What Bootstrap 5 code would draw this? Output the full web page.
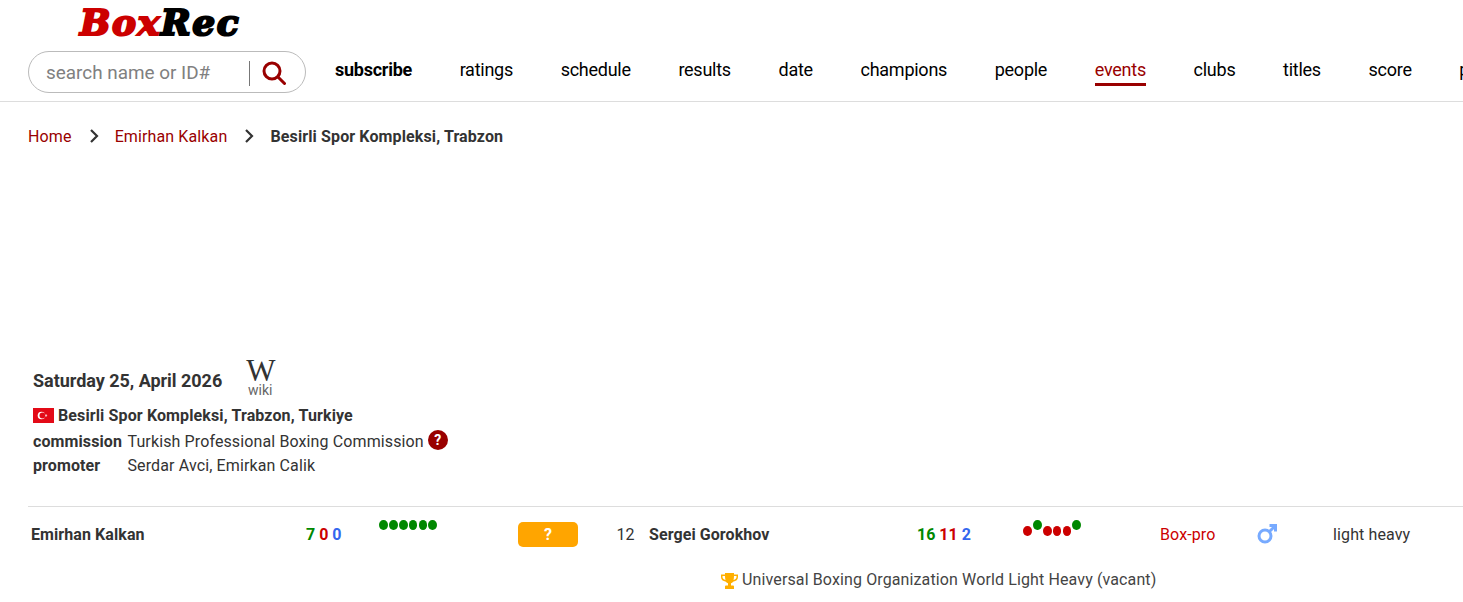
<!DOCTYPE html>
<html lang="en">

<head>
    <meta charset="UTF-8">
    <meta name="viewport" content="width=device-width, initial-scale=1.0">
    <title>BoxRec - Besirli Spor Kompleksi, Trabzon</title>
    <link href="https://cdn.jsdelivr.net/npm/bootstrap@5.3.0/dist/css/bootstrap.min.css" rel="stylesheet">
    <style>
        html, body {
            height: 602px;
            overflow: hidden;
        }

        body {
            font-family: Roboto, "Liberation Sans", sans-serif;
            font-size: 16px;
            line-height: 24px;
            letter-spacing: 0.12px;
            color: #333;
            background: #fff;
        }

        a {
            color: #990000;
            text-decoration: none;
        }

        .site-head {
            height: 102px;
            border-bottom: 1px solid #ddd;
            padding-left: 28px;
            overflow: hidden;
        }

        .logo-line {
            height: 51px;
            padding-left: 52px;
            padding-top: 4px;
        }

        .logo-text {
            font-family: "DejaVu Serif", serif;
            font-weight: 700;
            font-style: italic;
            font-size: 36px;
            line-height: 36px;
            letter-spacing: 1.6px;
            -webkit-text-stroke: 2.2px currentColor;
            display: block;
        }

        .logo-box {
            color: #cc0000;
        }

        .logo-rec {
            color: #000;
        }

        .search-pill {
            width: 278px;
            height: 42px;
            border: 1px solid #bbb;
            border-radius: 21px;
            padding-left: 17px;
            flex-shrink: 0;
        }

        .search-hint {
            width: 203px;
            font-size: 18.9px;
            letter-spacing: 0;
            color: #808080;
            padding-top: 1px;
        }

        .search-rule {
            width: 1px;
            height: 25px;
            margin-top: 2px;
            background: #777;
        }

        .search-glass {
            margin-left: 12px;
            margin-top: 2px;
        }

        .main-links {
            margin-left: 29px;
            margin-top: 4px;
            gap: 47.6px;
            font-size: 18px;
            letter-spacing: -0.25px;
            white-space: nowrap;
        }

        .main-links a {
            color: #000;
            display: block;
            height: 30px;
            line-height: 30px;
        }

        .main-links a.now {
            color: #990000;
            border-bottom: 3px solid #990000;
            height: 31px;
        }

        .main-links a.sub {
            font-weight: 700;
        }

        .crumbs {
            padding: 23px 0 0 28px;
            height: 257px;
            white-space: nowrap;
        }

        .crumb-sep {
            margin: 0 16px 0 13px;
            vertical-align: -1px;
        }

        .event-info {
            padding-left: 33px;
            height: 147px;
        }

        .date-line {
            height: 44px;
        }

        .date-text {
            font-size: 18px;
            font-weight: 700;
            letter-spacing: -0.03px;
            margin-top: 10px;
        }

        .wiki-mark {
            width: 28px;
            margin-left: 24px;
            text-align: center;
            color: #666;
            font-size: 14px;
            line-height: 14px;
            letter-spacing: 0;
        }

        .wiki-w {
            font-family: "Liberation Serif", serif;
            font-size: 31px;
            line-height: 24px;
            color: #333;
            display: block;
        }

        .venue-line {
            height: 25px;
            margin-bottom: 2px;
            font-weight: 700;
        }

        .flag-tr {
            margin-right: 4px;
        }

        .fact-line {
            height: 24px;
        }

        .fact-label {
            width: 94.5px;
            font-weight: 700;
            letter-spacing: 0.1px;
        }

        .ask-dot {
            width: 20px;
            height: 20px;
            border-radius: 50%;
            background: #990000;
            color: #fff;
            font-size: 14px;
            font-weight: 700;
            line-height: 20px;
            text-align: center;
            margin-left: 4px;
        }

        .bout-row {
            margin-left: 28px;
            border-top: 1px solid #ddd;
            height: 59px;
            white-space: nowrap;
        }

        .cell-a { width: 278px; padding-left: 3px; font-weight: 700; padding-top: 16px; letter-spacing: 0.08px; }
        .cell-rec { font-weight: 700; padding-top: 16px; letter-spacing: 0; }
        .cell-b { font-weight: 700; padding-top: 16px; letter-spacing: 0.08px; }
        .cell-num { width: 33px; text-align: center; padding-top: 16px; }
        .cell-rat { padding-top: 13px; }

        .rec-w { color: #008800; }
        .rec-l { color: #cc0000; }
        .rec-d { color: #3366ee; }

        .streak {
            gap: 1.1px;
            height: 24px;
            align-items: flex-start;
        }

        .pip {
            width: 8.800px;
            height: 10px;
            border-radius: 50%;
            background: #008800;
        }

        .pip.lost {
            background: #cc0000;
            margin-top: 6px;
        }

        .odds-btn {
            width: 60px;
            height: 25px;
            margin-top: 15px;
            border-radius: 5px;
            background: #ffa500;
            color: #fff;
            font-size: 16px;
            font-weight: 700;
            line-height: 25px;
            text-align: center;
        }

        .bout-title {
            padding-left: 721px;
            margin-top: 3px;
            color: #444;
            white-space: nowrap;
        }
    </style>
</head>

<body>
    <header class="site-head">
        <div class="logo-line">
            <a class="logo-text" href="#"><span class="logo-box">Box</span><span class="logo-rec">Rec</span></a>
        </div>
        <div class="d-flex align-items-start">
            <div class="search-pill d-flex align-items-center">
                <span class="search-hint">search name or ID#</span>
                <span class="search-rule"></span>
                <svg class="search-glass" width="24" height="24" viewBox="0 0 24 24" fill="none" stroke="#990000" stroke-width="3" stroke-linecap="round">
                    <circle cx="10" cy="10" r="8"/>
                    <path d="M16 16l6.500 6.500"/>
                </svg>
            </div>
            <nav class="main-links d-flex">
                <a class="sub" href="#">subscribe</a>
                <a href="#">ratings</a>
                <a href="#">schedule</a>
                <a href="#">results</a>
                <a href="#">date</a>
                <a href="#">champions</a>
                <a href="#">people</a>
                <a class="now" href="#">events</a>
                <a href="#">clubs</a>
                <a href="#">titles</a>
                <a href="#">score</a>
                <a href="#">pro</a>
            </nav>
        </div>
    </header>

    <div class="crumbs">
        <a href="#">Home</a>
        <svg class="crumb-sep" width="10" height="14" viewBox="0 0 10 14" fill="none" stroke="#333" stroke-width="2.200"><path d="M2 1l6 6-6 6"/></svg><a href="#">Emirhan Kalkan</a>
        <svg class="crumb-sep" width="10" height="14" viewBox="0 0 10 14" fill="none" stroke="#333" stroke-width="2.200"><path d="M2 1l6 6-6 6"/></svg><b>Besirli Spor Kompleksi, Trabzon</b>
    </div>

    <section class="event-info">
        <div class="date-line d-flex">
            <div class="date-text">Saturday 25, April 2026</div>
            <div class="wiki-mark"><span class="wiki-w">W</span>wiki</div>
        </div>
        <div class="venue-line d-flex align-items-center">
            <svg class="flag-tr" width="21" height="15" viewBox="0 0 21 15">
                <rect width="21" height="15" fill="#e30a17"/>
                <circle cx="8.500" cy="7.500" r="3.800" fill="#fff"/>
                <circle cx="9.500" cy="7.500" r="3" fill="#e30a17"/>
                <polygon points="14.500,7.500 11.800,6.600 13.500,8.900 13.500,6.100 11.800,8.400" fill="#fff"/>
            </svg>
            <span>Besirli Spor Kompleksi, Trabzon, Turkiye</span>
        </div>
        <div class="fact-line d-flex">
            <span class="fact-label">commission</span>
            <span>Turkish Professional Boxing Commission</span>
            <span class="ask-dot">?</span>
        </div>
        <div class="fact-line d-flex">
            <span class="fact-label">promoter</span>
            <span>Serdar Avci, Emirkan Calik</span>
        </div>
    </section>

    <div class="bout-row d-flex">
        <div class="cell-a">Emirhan Kalkan</div>
        <div class="cell-rec" style="width: 73px"><span class="rec-w">7</span> <span class="rec-l">0</span> <span class="rec-d">0</span></div>
        <div class="cell-rat" style="width: 139px"><div class="streak d-flex"><i class="pip"></i><i class="pip"></i><i class="pip"></i><i class="pip"></i><i class="pip"></i><i class="pip"></i></div></div>
        <div class="odds-btn">?</div>
        <div class="cell-num" style="margin-left: 31px">12</div>
        <div class="cell-b" style="margin-left: 7px; width: 268px">Sergei Gorokhov</div>
        <div class="cell-rec" style="width: 106px"><span class="rec-w">16</span> <span class="rec-l">11</span> <span class="rec-d">2</span></div>
        <div class="cell-rat" style="width: 137px"><div class="streak d-flex"><i class="pip lost"></i><i class="pip"></i><i class="pip lost"></i><i class="pip lost"></i><i class="pip lost"></i><i class="pip"></i></div></div>
        <div style="width: 97px; padding-top: 16px"><a class="rec-l" href="#">Box-pro</a></div>
        <div style="width: 76px; padding-top: 14px">
            <svg width="20" height="20" viewBox="0 0 20 20" fill="none" stroke="#77aaff" stroke-width="3"><circle cx="8" cy="12" r="6"/><path d="M12.500 7.500L18.500 1.500M12.500 1.500H18.500V7.500"/></svg>
        </div>
        <div style="padding-top: 16px">light heavy</div>
    </div>

    <div class="bout-title">
        <svg width="17" height="16" viewBox="0 0 17 16" fill="#ffaf00"><path d="M4 0h9v1.500h4V4c0 2.600-1.800 4.200-4.900 4.700-.6.8-1.200 1.200-2.100 1.500v2.300h1.800c.8 0 1.200.5 1.200 1.200V16H4v-2.300c0-.7.4-1.200 1.200-1.200H7v-2.300c-.9-.3-1.500-.7-2.100-1.500C1.800 8.200 0 6.600 0 4V1.500h4zM1.500 3v1c0 1.400 1 2.500 3 3.100C4.200 5.900 4 4.500 4 3zm14 0H13c0 1.500-.2 2.900-.5 4.100 2-.6 3-1.700 3-3.100z"/></svg>
        Universal Boxing Organization World Light Heavy (vacant)
    </div>

    <script src="https://cdn.jsdelivr.net/npm/bootstrap@5.3.0/dist/js/bootstrap.bundle.min.js"></script>
</body>

</html>
